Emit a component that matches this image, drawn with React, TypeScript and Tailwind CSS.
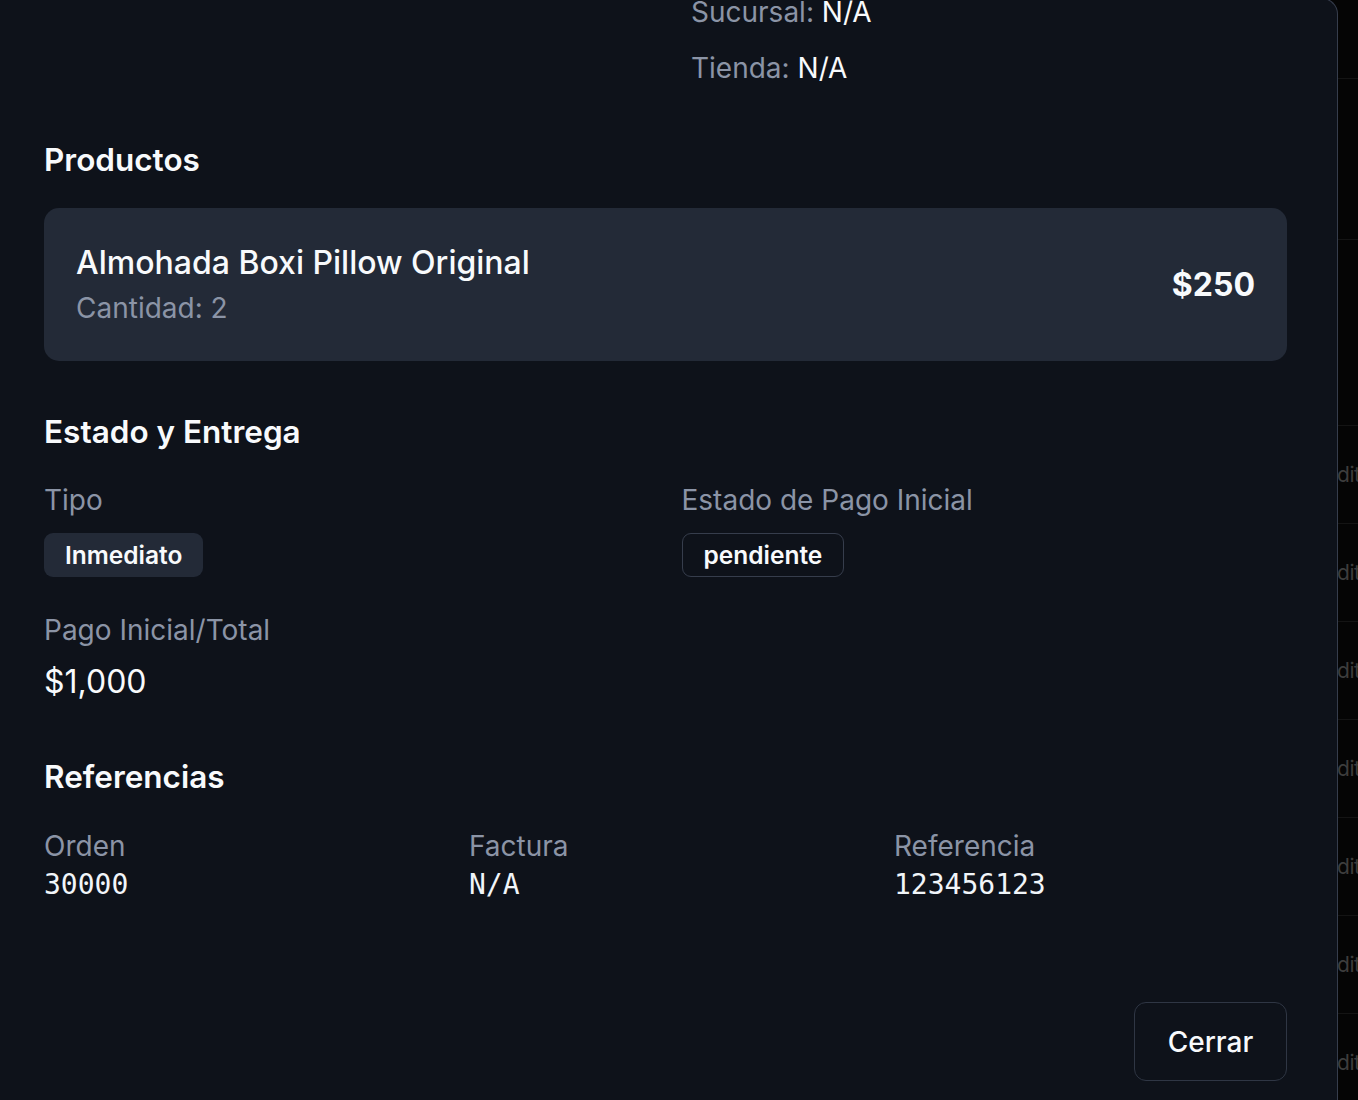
import React from "react";

const label = "text-[28px] leading-[36px] text-[#8b94a6]";
const heading = "text-[31.5px] leading-[42px] font-semibold text-[#f8fafc]";
const mono = "text-[28px] leading-[36px] text-[#f1f5f9]";

function BackdropStrip() {
  const rows = [
    { h: 79, t: false },
    { h: 161, t: false },
    { h: 186, t: false },
    { h: 98, t: true },
    { h: 98, t: true },
    { h: 98, t: true },
    { h: 98, t: true },
    { h: 98, t: true },
    { h: 98, t: true },
    { h: 98, t: true },
  ];
  return (
    <div className="flex-1 overflow-hidden bg-[#050505] flex flex-col">
      {rows.map((r, i) => (
        <div
          key={i}
          className="border-b border-[#141414] flex items-center shrink-0"
          style={{ height: r.h }}
        >
          {r.t && (
            <span
              className="ml-[-13px] text-[21px] tracking-[-0.5px] text-[#3d3d3d] whitespace-nowrap"
              style={{ fontFamily: "Inter, sans-serif" }}
            >
              Edit
            </span>
          )}
        </div>
      ))}
    </div>
  );
}

export default function App() {
  return (
    <div
      className="w-[1358px] h-[1100px] overflow-hidden flex bg-[#050505]"
      style={{ fontFamily: "Inter, 'Noto Sans', sans-serif" }}
    >
      <div className="w-[1338px] shrink-0 mt-[-2px] h-[1102px] bg-[#0e121a] border-r border-t border-[#363d4c] rounded-tr-[16px] pl-[44px] pr-[50px] flex flex-col overflow-hidden">
        <div className="ml-[647px] mt-[-5px] flex flex-col gap-[20px]">
          <div className={label}>
            Sucursal: <span className="text-[#f8fafc]">N/A</span>
          </div>
          <div className={label}>
            Tienda: <span className="text-[#f8fafc]">N/A</span>
          </div>
        </div>

        <h3 className={`${heading} mt-[53px]`}>Productos</h3>

        <div className="mt-[27px] rounded-[15px] bg-[#232a37] px-[32px] py-[35px] flex items-center justify-between">
          <div className="flex flex-col">
            <div className="text-[32px] leading-[40px] font-medium text-[#f8fafc]">
              Almohada Boxi Pillow Original
            </div>
            <div className="mt-[7px] text-[28px] leading-[36px] text-[#8b94a6]">Cantidad: 2</div>
          </div>
          <div className="text-[32px] font-bold text-[#f8fafc]">$250</div>
        </div>

        <h3 className={`${heading} mt-[50px]`}>Estado y Entrega</h3>

        <div className="mt-[29px] grid grid-cols-2 gap-x-[32px]">
          <div className="flex flex-col items-start">
            <div className={label}>Tipo</div>
            <div className="mt-[15px] h-[44px] px-[21px] rounded-[9px] bg-[#232a37] flex items-center text-[24.5px] font-semibold text-[#f8fafc]">
              Inmediato
            </div>
          </div>
          <div className="flex flex-col items-start">
            <div className={label}>Estado de Pago Inicial</div>
            <div className="mt-[15px] h-[44px] px-[21px] rounded-[9px] border border-[#363d4c] flex items-center text-[24.5px] font-semibold text-[#f8fafc]">
              pendiente
            </div>
          </div>
        </div>

        <div className="mt-[35px] flex flex-col">
          <div className={label}>Pago Inicial/Total</div>
          <div className="mt-[11px] text-[32px] leading-[45px] text-[#f8fafc]">$1,000</div>
        </div>

        <h3 className={`${heading} mt-[52px]`}>Referencias</h3>

        <div className="mt-[30px] grid grid-cols-3 gap-x-[32px]">
          {[
            ["Orden", "30000"],
            ["Factura", "N/A"],
            ["Referencia", "123456123"],
          ].map(([k, v]) => (
            <div key={k} className="flex flex-col">
              <div className={label}>{k}</div>
              <div
                className={`${mono} mt-[3px]`}
                style={{ fontFamily: "'DejaVu Sans Mono', 'Liberation Mono', monospace" }}
              >
                {v}
              </div>
            </div>
          ))}
        </div>

        <div className="mt-[99px] flex justify-end">
          <button className="w-[153px] h-[79px] rounded-[12px] border border-[#2f3644] bg-[#0e121a] text-[28px] font-medium text-[#f8fafc] flex items-center justify-center">
            Cerrar
          </button>
        </div>
      </div>
      <BackdropStrip />
    </div>
  );
}
